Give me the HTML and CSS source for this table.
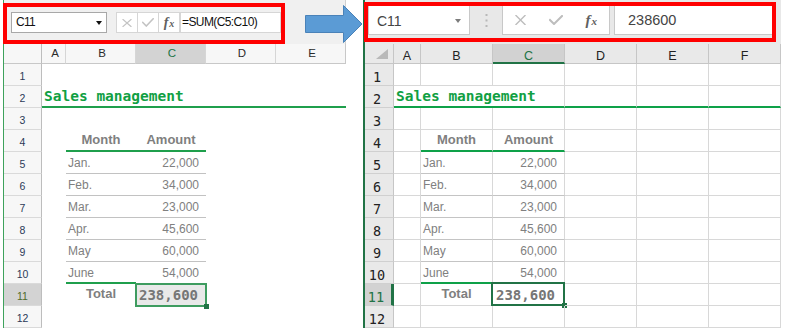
FILE: index.html
```html
<!DOCTYPE html>
<html lang="en">
<head>
<meta charset="utf-8">
<title>Excel formula bar comparison</title>
<link rel="stylesheet" href="styles.css">
</head>
<body>
<main class="stage">
  <section class="sheet sheet-l">
    <div class="fbar fbar-l">
      <div class="namebox namebox-l">C11<span class="dd-l"></span></div>
      <div class="btns btns-l">
        <span class="btn"><svg class="ic ic-x-l" viewBox="0 0 10 8"><path d="M1 0.5L9 7.5M9 0.5L1 7.5"/></svg></span>
        <span class="btn"><svg class="ic ic-ok-l" viewBox="0 0 12 9"><path d="M0.8 4.5L4.3 8L11.2 0.8"/></svg></span>
        <span class="btn fx fx-l">f<span class="fx-x">x</span></span>
      </div>
      <div class="formula formula-l">=SUM(C5:C10)</div>
    </div>
    <div class="grid grid-l">
      <div class="hd corner"></div><div class="hd">A</div><div class="hd">B</div><div class="hd on">C</div><div class="hd">D</div><div class="hd last">E</div>

      <div class="rh">1</div><div class="c"></div><div class="c"></div><div class="c"></div><div class="c"></div><div class="c"></div>
      <div class="rh">2</div><div class="c title span5">Sales management</div>
      <div class="rh">3</div><div class="c"></div><div class="c"></div><div class="c"></div><div class="c"></div><div class="c"></div>
      <div class="rh">4</div><div class="c"></div><div class="c th g2">Month</div><div class="c th g2">Amount</div><div class="c"></div><div class="c"></div>
      <div class="rh">5</div><div class="c"></div><div class="c mo tb">Jan.</div><div class="c mo num tb">22,000</div><div class="c"></div><div class="c"></div>
      <div class="rh">6</div><div class="c"></div><div class="c mo tb">Feb.</div><div class="c mo num tb">34,000</div><div class="c"></div><div class="c"></div>
      <div class="rh">7</div><div class="c"></div><div class="c mo tb">Mar.</div><div class="c mo num tb">23,000</div><div class="c"></div><div class="c"></div>
      <div class="rh">8</div><div class="c"></div><div class="c mo tb">Apr.</div><div class="c mo num tb">45,600</div><div class="c"></div><div class="c"></div>
      <div class="rh">9</div><div class="c"></div><div class="c mo tb">May</div><div class="c mo num tb">60,000</div><div class="c"></div><div class="c"></div>
      <div class="rh">10</div><div class="c"></div><div class="c mo g2">June</div><div class="c mo num">54,000</div><div class="c"></div><div class="c"></div>
      <div class="rh on">11</div><div class="c"></div><div class="c th">Total</div><div class="c tot tot-l">238,600<span class="sel sel-l"><span class="handle"></span></span></div><div class="c"></div><div class="c"></div>
      <div class="rh">12</div><div class="c"></div><div class="c"></div><div class="c"></div><div class="c"></div><div class="c"></div>
    </div>
    <div class="redbox redbox-l"></div>
  </section>

  <svg class="arrow" viewBox="0 0 60 40" width="60" height="40">
    <path d="M1.5 11.5H39.5V1.5L58 20L39.5 38.5V28.5H1.5Z"/>
  </svg>

  <section class="sheet sheet-r">
    <div class="fbar fbar-r">
      <div class="namebox namebox-r">C11<span class="dd-r"></span></div>
      <div class="vdots"><svg viewBox="0 0 3 13" width="3" height="13"><rect x="0.5" y="0" width="2" height="2"/><rect x="0.5" y="5.5" width="2" height="2"/><rect x="0.5" y="11" width="2" height="2"/></svg></div>
      <div class="btns btns-r">
        <span class="btn"><svg class="ic ic-x-r" viewBox="0 0 11 10"><path d="M1 0.5L10 9.5M10 0.5L1 9.5"/></svg></span>
        <span class="btn"><svg class="ic ic-ok-r" viewBox="0 0 14 10"><path d="M1 5L5 9L13 1"/></svg></span>
        <span class="btn fx fx-r">f<span class="fx-x">x</span></span>
      </div>
      <div class="formula formula-r">238600</div>
    </div>
    <div class="grid grid-r">
      <div class="hd corner"><svg class="tri" viewBox="0 0 12 10" width="12" height="10"><path d="M12 0V10H0Z"/></svg></div><div class="hd">A</div><div class="hd">B</div><div class="hd on">C</div><div class="hd">D</div><div class="hd">E</div><div class="hd">F</div>

      <div class="rh">1</div><div class="c"></div><div class="c"></div><div class="c"></div><div class="c"></div><div class="c"></div><div class="c"></div>
      <div class="rh">2</div><div class="c title span3">Sales management</div><div class="c g2"></div><div class="c g2"></div><div class="c g2"></div>
      <div class="rh">3</div><div class="c"></div><div class="c"></div><div class="c"></div><div class="c"></div><div class="c"></div><div class="c"></div>
      <div class="rh">4</div><div class="c"></div><div class="c th g2">Month</div><div class="c th g2">Amount</div><div class="c"></div><div class="c"></div><div class="c"></div>
      <div class="rh">5</div><div class="c"></div><div class="c mo tb">Jan.</div><div class="c mo num tb">22,000</div><div class="c"></div><div class="c"></div><div class="c"></div>
      <div class="rh">6</div><div class="c"></div><div class="c mo tb">Feb.</div><div class="c mo num tb">34,000</div><div class="c"></div><div class="c"></div><div class="c"></div>
      <div class="rh">7</div><div class="c"></div><div class="c mo tb">Mar.</div><div class="c mo num tb">23,000</div><div class="c"></div><div class="c"></div><div class="c"></div>
      <div class="rh">8</div><div class="c"></div><div class="c mo tb">Apr.</div><div class="c mo num tb">45,600</div><div class="c"></div><div class="c"></div><div class="c"></div>
      <div class="rh">9</div><div class="c"></div><div class="c mo tb">May</div><div class="c mo num tb">60,000</div><div class="c"></div><div class="c"></div><div class="c"></div>
      <div class="rh">10</div><div class="c"></div><div class="c mo g2">June</div><div class="c mo num">54,000</div><div class="c"></div><div class="c"></div><div class="c"></div>
      <div class="rh on">11</div><div class="c"></div><div class="c th">Total</div><div class="c tot tot-r">238,600<span class="sel sel-r"><span class="handle"></span></span></div><div class="c"></div><div class="c"></div><div class="c"></div>
      <div class="rh">12</div><div class="c"></div><div class="c"></div><div class="c"></div><div class="c"></div><div class="c"></div><div class="c"></div>
    </div>
    <div class="redbox redbox-r"></div>
  </section>
</main>
</body>
</html>
```

FILE: styles.css
```css
* {
  box-sizing: border-box;
}

html, body {
  margin: 0;
  padding: 0;
  background: #ffffff;
}

body {
  font-family: "Liberation Sans", Arial, sans-serif;
  color: #222;
}

.stage {
  position: relative;
  display: flex;
  align-items: flex-start;
  padding-left: 3px;
  height: 333px;
  overflow: hidden;
}

.sheet {
  position: relative;
  display: flex;
  flex-direction: column;
}

.sheet-l {
  width: 343px;
  margin-right: 17px;
  border-left: 1px solid #3ea25c;
}

.sheet-r {
  width: 418px;
  border-left: 2px solid #217346;
}

/* ---------- formula bars ---------- */
.fbar {
  display: flex;
  align-items: flex-start;
  height: 44px;
}

.fbar-l {
  background: #f0f0f0;
  padding: 12px 0 0 7px;
  border-right: 1px solid #d0d0d0;
}

.fbar-r {
  background: #e8e8e8;
  padding: 5px 0 0 3px;
}

.namebox {
  position: relative;
  background: #fff;
}

.namebox-l {
  width: 96px;
  height: 21px;
  border: 1px solid #a8a8a8;
  padding-left: 4px;
  font-size: 12px;
  letter-spacing: -0.7px;
  line-height: 19px;
  color: #111;
}

.dd-l {
  position: absolute;
  right: 4px;
  top: 8px;
  width: 0;
  height: 0;
  border-left: 3px solid transparent;
  border-right: 3px solid transparent;
  border-top: 4px solid #111;
}

.namebox-r {
  width: 102px;
  height: 30px;
  border: 1px solid #c8c8c8;
  padding: 2px 0 0 8px;
  font-size: 14px;
  line-height: 26px;
  color: #444;
}

.dd-r {
  position: absolute;
  right: 8px;
  top: 13px;
  width: 0;
  height: 0;
  border-left: 3.5px solid transparent;
  border-right: 3.5px solid transparent;
  border-top: 4px solid #7c7c7c;
}

.vdots {
  width: 32px;
  height: 30px;
  display: flex;
  justify-content: center;
  padding-top: 9px;
}

.vdots svg {
  fill: #b8b8b8;
  margin-left: 1px;
}

.btns {
  display: flex;
  background: #fff;
}

.btn {
  display: flex;
  align-items: center;
  justify-content: center;
}

.btns-l {
  margin-left: 9px;
  height: 21px;
  border: 1px solid #d6d6d6;
  border-right: none;
}

.btns-l .btn {
  width: 21px;
  border-right: 1px solid #d6d6d6;
}

.btns-l .btn:first-child {
  width: 21px;
}

.btns-r {
  margin-left: 0;
  width: 108px;
  height: 30px;
  border: 1px solid #c8c8c8;
}

.btns-r .btn {
  flex: 1;
}

.ic {
  fill: none;
  stroke-linecap: square;
}

.ic-x-l {
  width: 10px;
  height: 8px;
  stroke: #c3c3c3;
  stroke-width: 1.2;
}

.ic-ok-l {
  width: 12px;
  height: 9px;
  stroke: #c3c3c3;
  stroke-width: 1.6;
}

.ic-x-r {
  width: 11px;
  height: 10px;
  stroke: #bdbdbd;
  stroke-width: 1.4;
}

.ic-ok-r {
  width: 14px;
  height: 10px;
  stroke: #bdbdbd;
  stroke-width: 2;
}

.fx {
  font-family: "Liberation Serif", "Times New Roman", serif;
  font-style: italic;
  font-weight: bold;
  color: #606060;
  font-size: 14px;
  line-height: 1;
}

.fx-x {
  font-size: 10px;
  position: relative;
  top: 1px;
  margin-left: 1px;
}

.fx-r {
  font-size: 15px;
}

.fx-r .fx-x {
  font-size: 11px;
}

.formula {
  background: #fff;
}

.formula-l {
  width: 101px;
  height: 21px;
  border: 1px solid #d6d6d6;
  padding-left: 1px;
  font-size: 12px;
  letter-spacing: -0.6px;
  line-height: 19px;
  color: #111;
  white-space: nowrap;
}

.formula-r {
  margin-left: 4px;
  width: 162px;
  height: 30px;
  border: 1px solid #c8c8c8;
  padding: 1px 0 0 13px;
  font-size: 14.5px;
  line-height: 26px;
  color: #444;
}

/* ---------- red annotation boxes ---------- */
.redbox {
  position: absolute;
  border: 4px solid #ff0000;
  pointer-events: none;
}

.redbox-l {
  left: -1px;
  top: 3px;
  width: 282px;
  height: 41px;
}

.redbox-r {
  left: -1px;
  top: 2px;
  width: 412px;
  height: 40px;
}

/* ---------- arrow ---------- */
.arrow {
  position: absolute;
  left: 304px;
  top: 4px;
  z-index: 5;
}

.arrow path {
  fill: #5b9bd5;
  stroke: #4a82b8;
  stroke-width: 1;
}

/* ---------- grids ---------- */
.grid {
  display: grid;
}

.grid-l {
  grid-template-columns: 38px 24px 70px 70px 70px 70px;
  grid-template-rows: 20px repeat(12, 22px);
}

.grid-r {
  grid-template-columns: 29px 27px 72px 72px 72px 72px 72px;
  grid-template-rows: 20px repeat(12, 22px);
}

.hd, .rh {
  text-align: center;
  white-space: nowrap;
}

.c {
  position: relative;
  white-space: nowrap;
}

/* left sheet headers */
.grid-l .hd {
  background: #f7f7f7;
  border-right: 1px solid #d6d6d6;
  border-bottom: 1px solid #c8c8c8;
  font-size: 11.5px;
  line-height: 19px;
  padding-left: 3px;
  color: #2a2a2a;
}

.grid-l .hd.corner {
  border-right-color: #bdbdbd;
}

.grid-l .hd.last {
  border-right-color: #c8c8c8;
}

.grid-l .hd.on {
  background: #d3d3d3;
  color: #217346;
}

.grid-l .rh {
  background: #f7f7f7;
  border-right: 1px solid #bdbdbd;
  border-bottom: 1px solid #dadada;
  font-size: 10.5px;
  line-height: 22px;
  padding-top: 1px;
  color: #2c3a58;
}

.grid-l .rh.on {
  background: #d3d3d3;
  color: #4f6a2a;
}

/* right sheet headers */
.grid-r .hd {
  background: #e9e9e9;
  border-right: 1px solid #c6c6c6;
  border-bottom: 1px solid #c6c6c6;
  font-size: 12.5px;
  line-height: 20px;
  padding-top: 2px;
  color: #222;
}

.grid-r .hd.corner {
  position: relative;
}

.tri {
  position: absolute;
  right: 5px;
  bottom: 4px;
  fill: #b9b9b9;
}

.grid-r .hd.on {
  background: #d2d2d2;
  color: #217346;
  border-bottom: 2px solid #217346;
}

.grid-r .rh {
  background: #e9e9e9;
  border-right: 1px solid #c6c6c6;
  border-bottom: 1px solid #d0d0d0;
  font-family: "DejaVu Sans Mono", monospace;
  font-size: 13.5px;
  line-height: 22px;
  padding: 2px 4px 0 0;
  color: #222;
}

.grid-r .rh.on {
  background: #d2d2d2;
  color: #217346;
  border-right: 3px solid #217346;
}

.grid-r .c {
  border-right: 1px solid #d8d8d8;
  border-bottom: 1px solid #d8d8d8;
}

/* cell content */
.span5 {
  grid-column: span 5;
}

.span3 {
  grid-column: span 3;
}

.title {
  font-family: "DejaVu Sans Mono", monospace;
  font-weight: bold;
  font-size: 14.5px;
  line-height: 21px;
  color: #10a043;
  padding-left: 2px;
}

.th {
  font-weight: bold;
  font-size: 13px;
  line-height: 20px;
  color: #7f7f7f;
  text-align: center;
}

.mo {
  font-size: 12px;
  line-height: 22px;
  color: #808080;
  padding-left: 2px;
}

.num {
  text-align: right;
  padding-right: 7px;
}

.grid-l .tb {
  border-bottom: 1px solid #c2c2c2;
}

.grid-r .tb {
  border-bottom-color: #c4c4c4;
}

.grid-l .g2,
.grid-l .title {
  border-bottom: 2px solid #1f9f4c;
}

.grid-r .c.g2,
.grid-r .c.title {
  border-bottom: 2px solid #0ea148;
}

.tot {
  font-family: "DejaVu Sans Mono", monospace;
  font-weight: bold;
  font-size: 14px;
  line-height: 22px;
  color: #767676;
  text-align: right;
  padding-right: 8px;
}

.tot-l {
  background: #e9e9e9;
}

.tot-r {
  padding-right: 9px;
}

.sel {
  position: absolute;
}

.sel-l {
  left: -1px;
  top: -1px;
  right: -1px;
  bottom: -1px;
  border: 2px solid #3f9c60;
}

.sel-r {
  left: -2px;
  top: -2px;
  right: -1px;
  bottom: -1px;
  border: 2px solid #217346;
}

.handle {
  position: absolute;
  right: -4px;
  bottom: -4px;
  width: 5px;
  height: 5px;
  background: #217346;
}
```
